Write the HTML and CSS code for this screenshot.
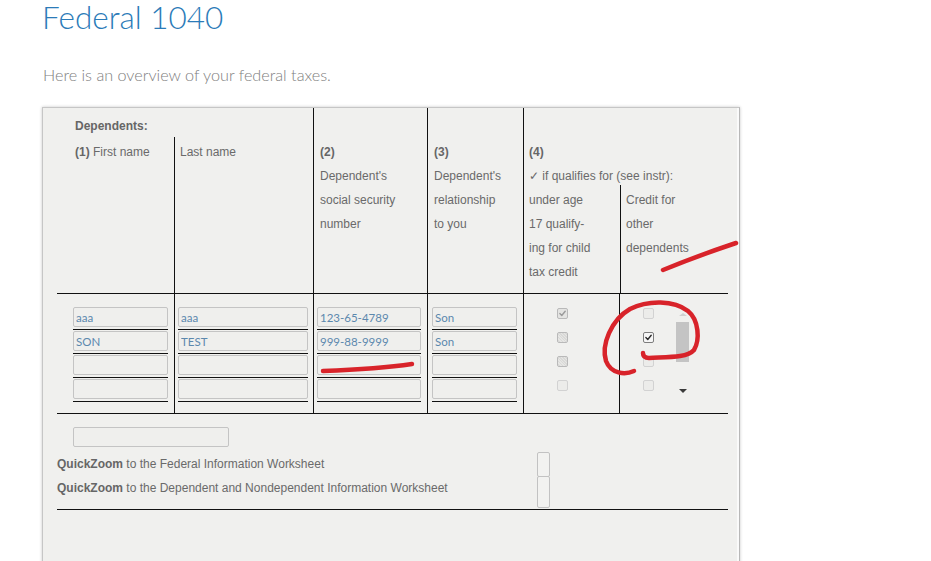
FILE: index.html
```html
<!DOCTYPE html>
<html lang="en">
<head>
<meta charset="utf-8">
<title>Federal 1040</title>
<link rel="stylesheet" href="styles.css">
</head>
<body>
<main class="page">
  <h1 class="title">Federal 1040</h1>
  <p class="intro">Here is an overview of your federal taxes.</p>

  <section class="panel">
    <!-- column headings of the dependents table -->
    <div class="deps-grid deps-head">
      <div class="hd names">
        <div class="caption"><b>Dependents:</b></div>
        <div class="name-cols">
          <div class="name-col"><b>(1)</b> First name</div>
          <div class="name-col sep">Last name</div>
        </div>
      </div>
      <div class="hd sep col-text"><b>(2)</b><br>Dependent's<br>social security<br>number</div>
      <div class="hd sep col-text"><b>(3)</b><br>Dependent's<br>relationship<br>to you</div>
      <div class="hd sep qual">
        <div class="qual-top"><b>(4)</b><br>&#10003; if qualifies for (see instr):</div>
        <div class="qual-cols">
          <div class="qual-col">under age<br>17 qualify-<br>ing for child<br>tax credit</div>
          <div class="qual-col sep">Credit for<br>other<br>dependents</div>
        </div>
      </div>
    </div>

    <!-- dependent entry rows -->
    <div class="deps-grid deps-body">
      <div class="fields c1">
        <div class="field"><input class="box" value="aaa"></div>
        <div class="field"><input class="box" value="SON"></div>
        <div class="field"><input class="box" value=""></div>
        <div class="field"><input class="box" value=""></div>
      </div>
      <div class="fields c2 sep">
        <div class="field"><input class="box" value="aaa"></div>
        <div class="field"><input class="box" value="TEST"></div>
        <div class="field"><input class="box" value=""></div>
        <div class="field"><input class="box" value=""></div>
      </div>
      <div class="fields c3 sep">
        <div class="field"><input class="box" value="123-65-4789"></div>
        <div class="field"><input class="box" value="999-88-9999"></div>
        <div class="field"><input class="box" value=""></div>
        <div class="field"><input class="box" value=""></div>
      </div>
      <div class="fields c4 sep">
        <div class="field"><input class="box" value="Son"></div>
        <div class="field"><input class="box" value="Son"></div>
        <div class="field"><input class="box" value=""></div>
        <div class="field"><input class="box" value=""></div>
      </div>
      <div class="checks c5 sep">
        <span class="cb off"><svg viewBox="0 0 11 11"><path class="tick grey" d="M2.3 5.6 4.6 7.9 8.8 2.8"/></svg></span>
        <span class="cb off dot"></span>
        <span class="cb off dot"></span>
        <span class="cb off faint"></span>
      </div>
      <div class="c6 sep">
        <div class="checks">
          <span class="cb off faint"></span>
          <span class="cb on"><svg viewBox="0 0 11 11"><path class="tick" d="M2.3 5.6 4.6 7.9 8.8 2.8"/></svg></span>
          <span class="cb off faint"></span>
          <span class="cb off faint"></span>
        </div>
        <div class="vscroll">
          <span class="arrow up"></span>
          <span class="thumb"></span>
          <span class="arrow down"></span>
        </div>
      </div>
    </div>

    <!-- worksheet links -->
    <div class="deps-foot">
      <input class="box wide" value="">
      <div class="zoom-row">
        <div class="zoom-links">
          <div><b>QuickZoom</b> to the Federal Information Worksheet</div>
          <div><b>QuickZoom</b> to the Dependent and Nondependent Information Worksheet</div>
        </div>
        <div class="zoom-btns">
          <span class="zbtn"></span>
          <span class="zbtn tall"></span>
        </div>
      </div>
    </div>
  </section>

  <!-- hand-drawn marker strokes -->
  <svg class="ink" viewBox="0 0 931 561" aria-hidden="true">
    <path d="M663 270 C685 261 712 251 736 243"/>
    <path d="M323 371 C350 370 385 368 412 364"/>
    <path d="M634 371 C625 375 611 374 606 361 C601 345 611 320 630 309 C648 300 674 300 688 311 C699 320 700 340 694 350 C687 358 668 357 649 358 C645 358 643 356 643 353"/>
  </svg>
</main>
</body>
</html>
```

FILE: styles.css
```css
* { box-sizing: border-box; }

html, body {
  margin: 0;
  background: #ffffff;
}

.page {
  position: relative;
  height: 561px;
  overflow: hidden;
  padding-left: 42px;
}

.title {
  margin: 0;
  font-family: Lato, "Open Sans", sans-serif;
  font-weight: 300;
  font-size: 31.5px;
  line-height: 34px;
  color: #2b7bb8;
}

.intro {
  margin: 31px 0 22px 1px;
  font-family: Lato, "Open Sans", sans-serif;
  font-weight: 300;
  font-size: 16.2px;
  line-height: 20px;
  color: #808080;
}

.panel {
  width: 698px;
  height: 520px;
  background: #f0f0ee;
  border: 1px solid #c6c6c6;
  border-right-color: #b8b8b8;
  box-shadow: 0 0 3px rgba(0, 0, 0, 0.22), inset -2px 0 0 #fafafa;
  padding: 0 11px 0 14px;
  font-family: "Liberation Sans", Arial, sans-serif;
  font-size: 12px;
  color: #6a6a6a;
}

.panel b { color: #666; }

.deps-grid {
  display: grid;
  grid-template-columns: 117px 139px 114px 96px 96px 108px;
}

.sep { border-left: 1px solid #111; }

/* heading block */
.deps-head {
  height: 186px;
  border-bottom: 1px solid #111;
  line-height: 24px;
}

.names {
  grid-column: span 2;
  display: flex;
  flex-direction: column;
}

.caption {
  padding: 7px 0 0 18px;
  line-height: 22px;
}

.name-cols {
  flex: 1;
  display: grid;
  grid-template-columns: 117px 139px;
}

.name-col { padding: 3px 0 0 18px; }
.name-col.sep { padding-left: 5px; }

.col-text { padding: 32px 0 0 6px; }

.qual {
  grid-column: span 2;
  display: flex;
  flex-direction: column;
}

.qual-top {
  padding: 32px 0 0 5px;
  margin-bottom: -3px;
  white-space: nowrap;
}

.qual-cols {
  flex: 1;
  display: grid;
  grid-template-columns: 96px 108px;
}

.qual-col { padding: 3px 0 0 5px; }

/* entry rows */
.deps-body {
  height: 120px;
  border-bottom: 1px solid #111;
}

.fields {
  display: flex;
  flex-direction: column;
  gap: 1px;
  padding-top: 13px;
}

.field {
  border-bottom: 1px solid #111;
  padding-bottom: 2px;
}

.box {
  display: block;
  width: 100%;
  height: 20px;
  margin: 0;
  padding: 0 2px;
  border: 1px solid #c4c4c4;
  border-radius: 2px;
  background: #efefed;
  font-family: Lato, "Open Sans", sans-serif;
  font-size: 11.5px;
  color: #5c88ad;
  outline: none;
}

.c1 { padding-left: 16px; padding-right: 6px; }
.c2 { padding-left: 3px; padding-right: 5px; }
.c3 { padding-left: 3px; padding-right: 6px; }
.c4 { padding-left: 4px; padding-right: 6px; }

.checks {
  display: flex;
  flex-direction: column;
  gap: 13px;
  padding-top: 14px;
}

.c5.checks { padding-left: 33px; }

.c6 {
  display: flex;
  padding-left: 23px;
}

.cb {
  display: block;
  width: 11px;
  height: 11px;
  border: 1px solid #b9b9b9;
  border-radius: 2px;
  background: #e4e4e2;
}

.cb svg {
  display: block;
  width: 9px;
  height: 9px;
}

.cb.dot {
  background: repeating-linear-gradient(45deg, #e6e6e4 0 1px, #d9d9d7 1px 2px);
}

.cb.faint {
  border-color: #d2d2d2;
  background: #ececea;
}

.cb.on {
  border-color: #7d7d7d;
  background: #f6f6f6;
}

.tick {
  fill: none;
  stroke: #2a2a2a;
  stroke-width: 1.7;
  stroke-linecap: round;
  stroke-linejoin: round;
}

.tick.grey { stroke: #9a9a9a; }

.vscroll {
  display: flex;
  flex-direction: column;
  align-items: center;
  width: 13px;
  height: 88px;
  margin: 15px 0 0 22px;
}

.arrow {
  width: 0;
  height: 0;
  border-left: 4px solid transparent;
  border-right: 4px solid transparent;
}

.arrow.up {
  margin-top: 4px;
  border-bottom: 3px solid #d0d0d0;
}

.arrow.down {
  margin-top: 27px;
  border-top: 4px solid #3a3a3a;
}

.thumb {
  width: 13px;
  height: 40px;
  margin-top: 6px;
  background: #c4c4c4;
}

/* worksheet links */
.deps-foot {
  height: 96px;
  padding-top: 13px;
  border-bottom: 1px solid #111;
}

.box.wide {
  width: 156px;
  height: 20px;
  margin-left: 16px;
}

.zoom-row {
  display: flex;
  margin-top: 5px;
}

.zoom-links {
  width: 480px;
  line-height: 24px;
  white-space: nowrap;
}

.zoom-btns {
  display: flex;
  flex-direction: column;
}

.zbtn {
  display: block;
  width: 13px;
  height: 25px;
  border: 1px solid #c2c2c2;
  border-radius: 2px;
  background: #f2f2f0;
}

.zbtn.tall {
  height: 32px;
  margin-top: -1px;
}

.ink {
  position: absolute;
  left: 0;
  top: 0;
  width: 931px;
  height: 561px;
  pointer-events: none;
}

.ink path {
  fill: none;
  stroke: #d8232a;
  stroke-width: 4.5;
  stroke-linecap: round;
  stroke-linejoin: round;
}
```
